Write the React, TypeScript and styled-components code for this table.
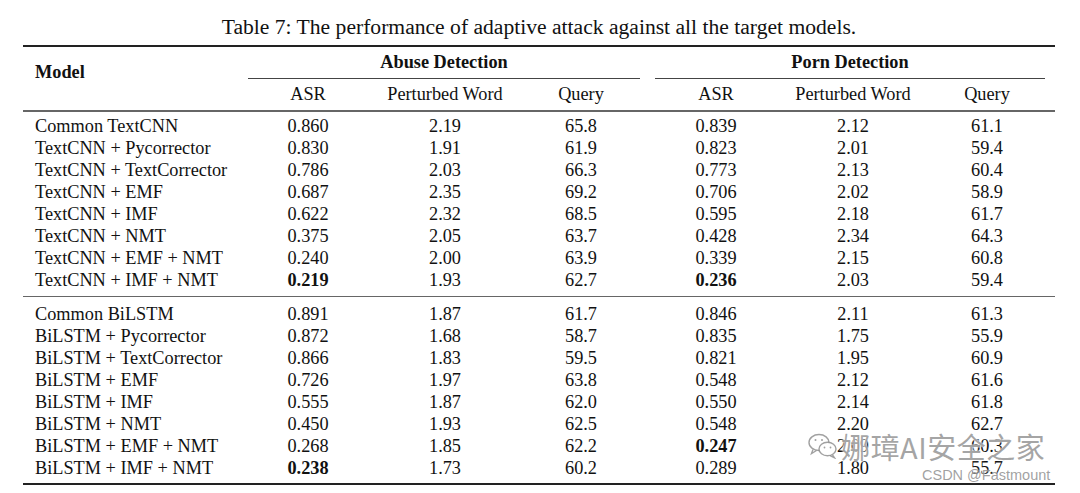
import React from "react";
import styled, { createGlobalStyle } from "styled-components";

const GlobalStyle = createGlobalStyle`
  html, body {
    margin: 0;
    padding: 0;
    background: #ffffff;
  }
  body {
    font-family: "Liberation Serif", "Times New Roman", serif;
    color: #111;
  }
`;

const Page = styled.div`
  position: relative;
  width: 1080px;
  height: 493px;
  overflow: hidden;
  padding: 0 25px 0 23px;
  box-sizing: border-box;
`;

const Caption = styled.div`
  height: 45px;
  display: flex;
  align-items: center;
  justify-content: center;
  padding-top: 9px;
  box-sizing: border-box;
  font-size: 21.6px;
  white-space: nowrap;
`;

const COLS = "220px 130px 144px 128px 5px 132px 142px 126px 5px";

const Rule = styled.div<{ $thick?: boolean }>`
  height: ${(p) => (p.$thick ? 2 : 1.5)}px;
  background: ${(p) => (p.$thick ? "#222" : "#666")};
`;

const HeadGrid = styled.div`
  display: grid;
  grid-template-columns: ${COLS};
  grid-template-rows: 31px 1px 31px;
  font-size: 18.3px;
`;

const ModelHead = styled.div`
  grid-row: 1 / 4;
  grid-column: 1;
  font-weight: bold;
  padding: 15px 0 0 12px;
`;

const GroupHead = styled.div<{ $col: number }>`
  grid-row: 1;
  grid-column: ${(p) => p.$col} / span 3;
  font-weight: bold;
  display: flex;
  align-items: center;
  justify-content: center;
`;

const CMidRule = styled.div<{ $col: number }>`
  grid-row: 2;
  grid-column: ${(p) => p.$col} / span 3;
  margin: 0 5px;
  background: #444;
`;

const SubHead = styled.div<{ $col: number }>`
  grid-row: 3;
  grid-column: ${(p) => p.$col};
  display: flex;
  align-items: center;
  justify-content: center;
`;

const Body = styled.div<{ $top: number; $bottom: number }>`
  padding: ${(p) => p.$top}px 0 ${(p) => p.$bottom}px;
`;

const Row = styled.div`
  display: grid;
  grid-template-columns: ${COLS};
  height: 22px;
  align-items: center;
  font-size: 18.3px;
`;

const ModelCell = styled.div`
  padding-left: 12px;
  white-space: nowrap;
`;

const Cell = styled.div<{ $bold?: boolean }>`
  text-align: center;
  font-weight: ${(p) => (p.$bold ? "bold" : "normal")};
`;

const Gap = styled.div``;

const Watermark = styled.div`
  position: absolute;
  left: 808px;
  top: 425px;
  display: flex;
  align-items: center;
  gap: 3px;
  color: rgba(125, 125, 125, 0.7);
  font-family: "Noto Sans CJK SC", "Noto Sans", sans-serif;
  font-size: 29px;
  letter-spacing: 0.5px;
  text-shadow: 0 0 2px #fff, 0 0 2px #fff;
`;

const Credit = styled.div`
  position: absolute;
  left: 922px;
  top: 467px;
  font-family: "Liberation Sans", Arial, sans-serif;
  font-size: 14.5px;
  color: rgba(130, 130, 130, 0.75);
  text-shadow: 0 0 2px #fff;
`;

type Line = [string, string, string, string, string, string, string, boolean?, boolean?];

const textcnn: Line[] = [
  ["Common TextCNN", "0.860", "2.19", "65.8", "0.839", "2.12", "61.1"],
  ["TextCNN + Pycorrector", "0.830", "1.91", "61.9", "0.823", "2.01", "59.4"],
  ["TextCNN + TextCorrector", "0.786", "2.03", "66.3", "0.773", "2.13", "60.4"],
  ["TextCNN + EMF", "0.687", "2.35", "69.2", "0.706", "2.02", "58.9"],
  ["TextCNN + IMF", "0.622", "2.32", "68.5", "0.595", "2.18", "61.7"],
  ["TextCNN + NMT", "0.375", "2.05", "63.7", "0.428", "2.34", "64.3"],
  ["TextCNN + EMF + NMT", "0.240", "2.00", "63.9", "0.339", "2.15", "60.8"],
  ["TextCNN + IMF + NMT", "0.219", "1.93", "62.7", "0.236", "2.03", "59.4", true, true],
];

const bilstm: Line[] = [
  ["Common BiLSTM", "0.891", "1.87", "61.7", "0.846", "2.11", "61.3"],
  ["BiLSTM + Pycorrector", "0.872", "1.68", "58.7", "0.835", "1.75", "55.9"],
  ["BiLSTM + TextCorrector", "0.866", "1.83", "59.5", "0.821", "1.95", "60.9"],
  ["BiLSTM + EMF", "0.726", "1.97", "63.8", "0.548", "2.12", "61.6"],
  ["BiLSTM + IMF", "0.555", "1.87", "62.0", "0.550", "2.14", "61.8"],
  ["BiLSTM + NMT", "0.450", "1.93", "62.5", "0.548", "2.20", "62.7"],
  ["BiLSTM + EMF + NMT", "0.268", "1.85", "62.2", "0.247", "2.09", "60.3", false, true],
  ["BiLSTM + IMF + NMT", "0.238", "1.73", "60.2", "0.289", "1.80", "55.7", true, false],
];

const DataRow: React.FC<{ line: Line }> = ({ line }) => {
  const [name, a1, p1, q1, a2, p2, q2, b1, b2] = line;
  return (
    <Row>
      <ModelCell>{name}</ModelCell>
      <Cell $bold={b1}>{a1}</Cell>
      <Cell>{p1}</Cell>
      <Cell>{q1}</Cell>
      <Gap />
      <Cell $bold={b2}>{a2}</Cell>
      <Cell>{p2}</Cell>
      <Cell>{q2}</Cell>
      <Gap />
    </Row>
  );
};

const WeChatIcon = () => (
  <svg width="30" height="26" viewBox="0 0 30 26" fill="none" stroke="rgba(130,130,130,0.75)" strokeWidth="1.4">
    <ellipse cx="11" cy="9.5" rx="10" ry="8" />
    <path d="M5 16.5 L3.5 20.5 L8.5 17.5" />
    <ellipse cx="19.5" cy="16" rx="8.5" ry="6.8" fill="#fff" />
    <path d="M24.5 21.8 L26.5 24.8 L22 22.6" />
    <circle cx="7.5" cy="7" r="1" fill="rgba(130,130,130,0.75)" stroke="none" />
    <circle cx="14" cy="7" r="1" fill="rgba(130,130,130,0.75)" stroke="none" />
    <circle cx="16.5" cy="14.5" r="0.9" fill="rgba(130,130,130,0.75)" stroke="none" />
    <circle cx="22.5" cy="14.5" r="0.9" fill="rgba(130,130,130,0.75)" stroke="none" />
  </svg>
);

export default function App() {
  return (
    <>
      <GlobalStyle />
      <Page>
        <Caption>Table 7: The performance of adaptive attack against all the target models.</Caption>
        <Rule $thick />
        <HeadGrid>
          <ModelHead>Model</ModelHead>
          <GroupHead $col={2}>Abuse Detection</GroupHead>
          <GroupHead $col={6}>Porn Detection</GroupHead>
          <CMidRule $col={2} />
          <CMidRule $col={6} />
          <SubHead $col={2}>ASR</SubHead>
          <SubHead $col={3}>Perturbed Word</SubHead>
          <SubHead $col={4}>Query</SubHead>
          <SubHead $col={6}>ASR</SubHead>
          <SubHead $col={7}>Perturbed Word</SubHead>
          <SubHead $col={8}>Query</SubHead>
        </HeadGrid>
        <Rule />
        <Body $top={4} $bottom={4}>
          {textcnn.map((l) => (
            <DataRow key={l[0]} line={l} />
          ))}
        </Body>
        <Rule />
        <Body $top={6} $bottom={4}>
          {bilstm.map((l) => (
            <DataRow key={l[0]} line={l} />
          ))}
        </Body>
        <Rule $thick />
        <Watermark>
          <WeChatIcon />
          <span>娜璋AI安全之家</span>
        </Watermark>
        <Credit>CSDN @Fastmount</Credit>
      </Page>
    </>
  );
}
